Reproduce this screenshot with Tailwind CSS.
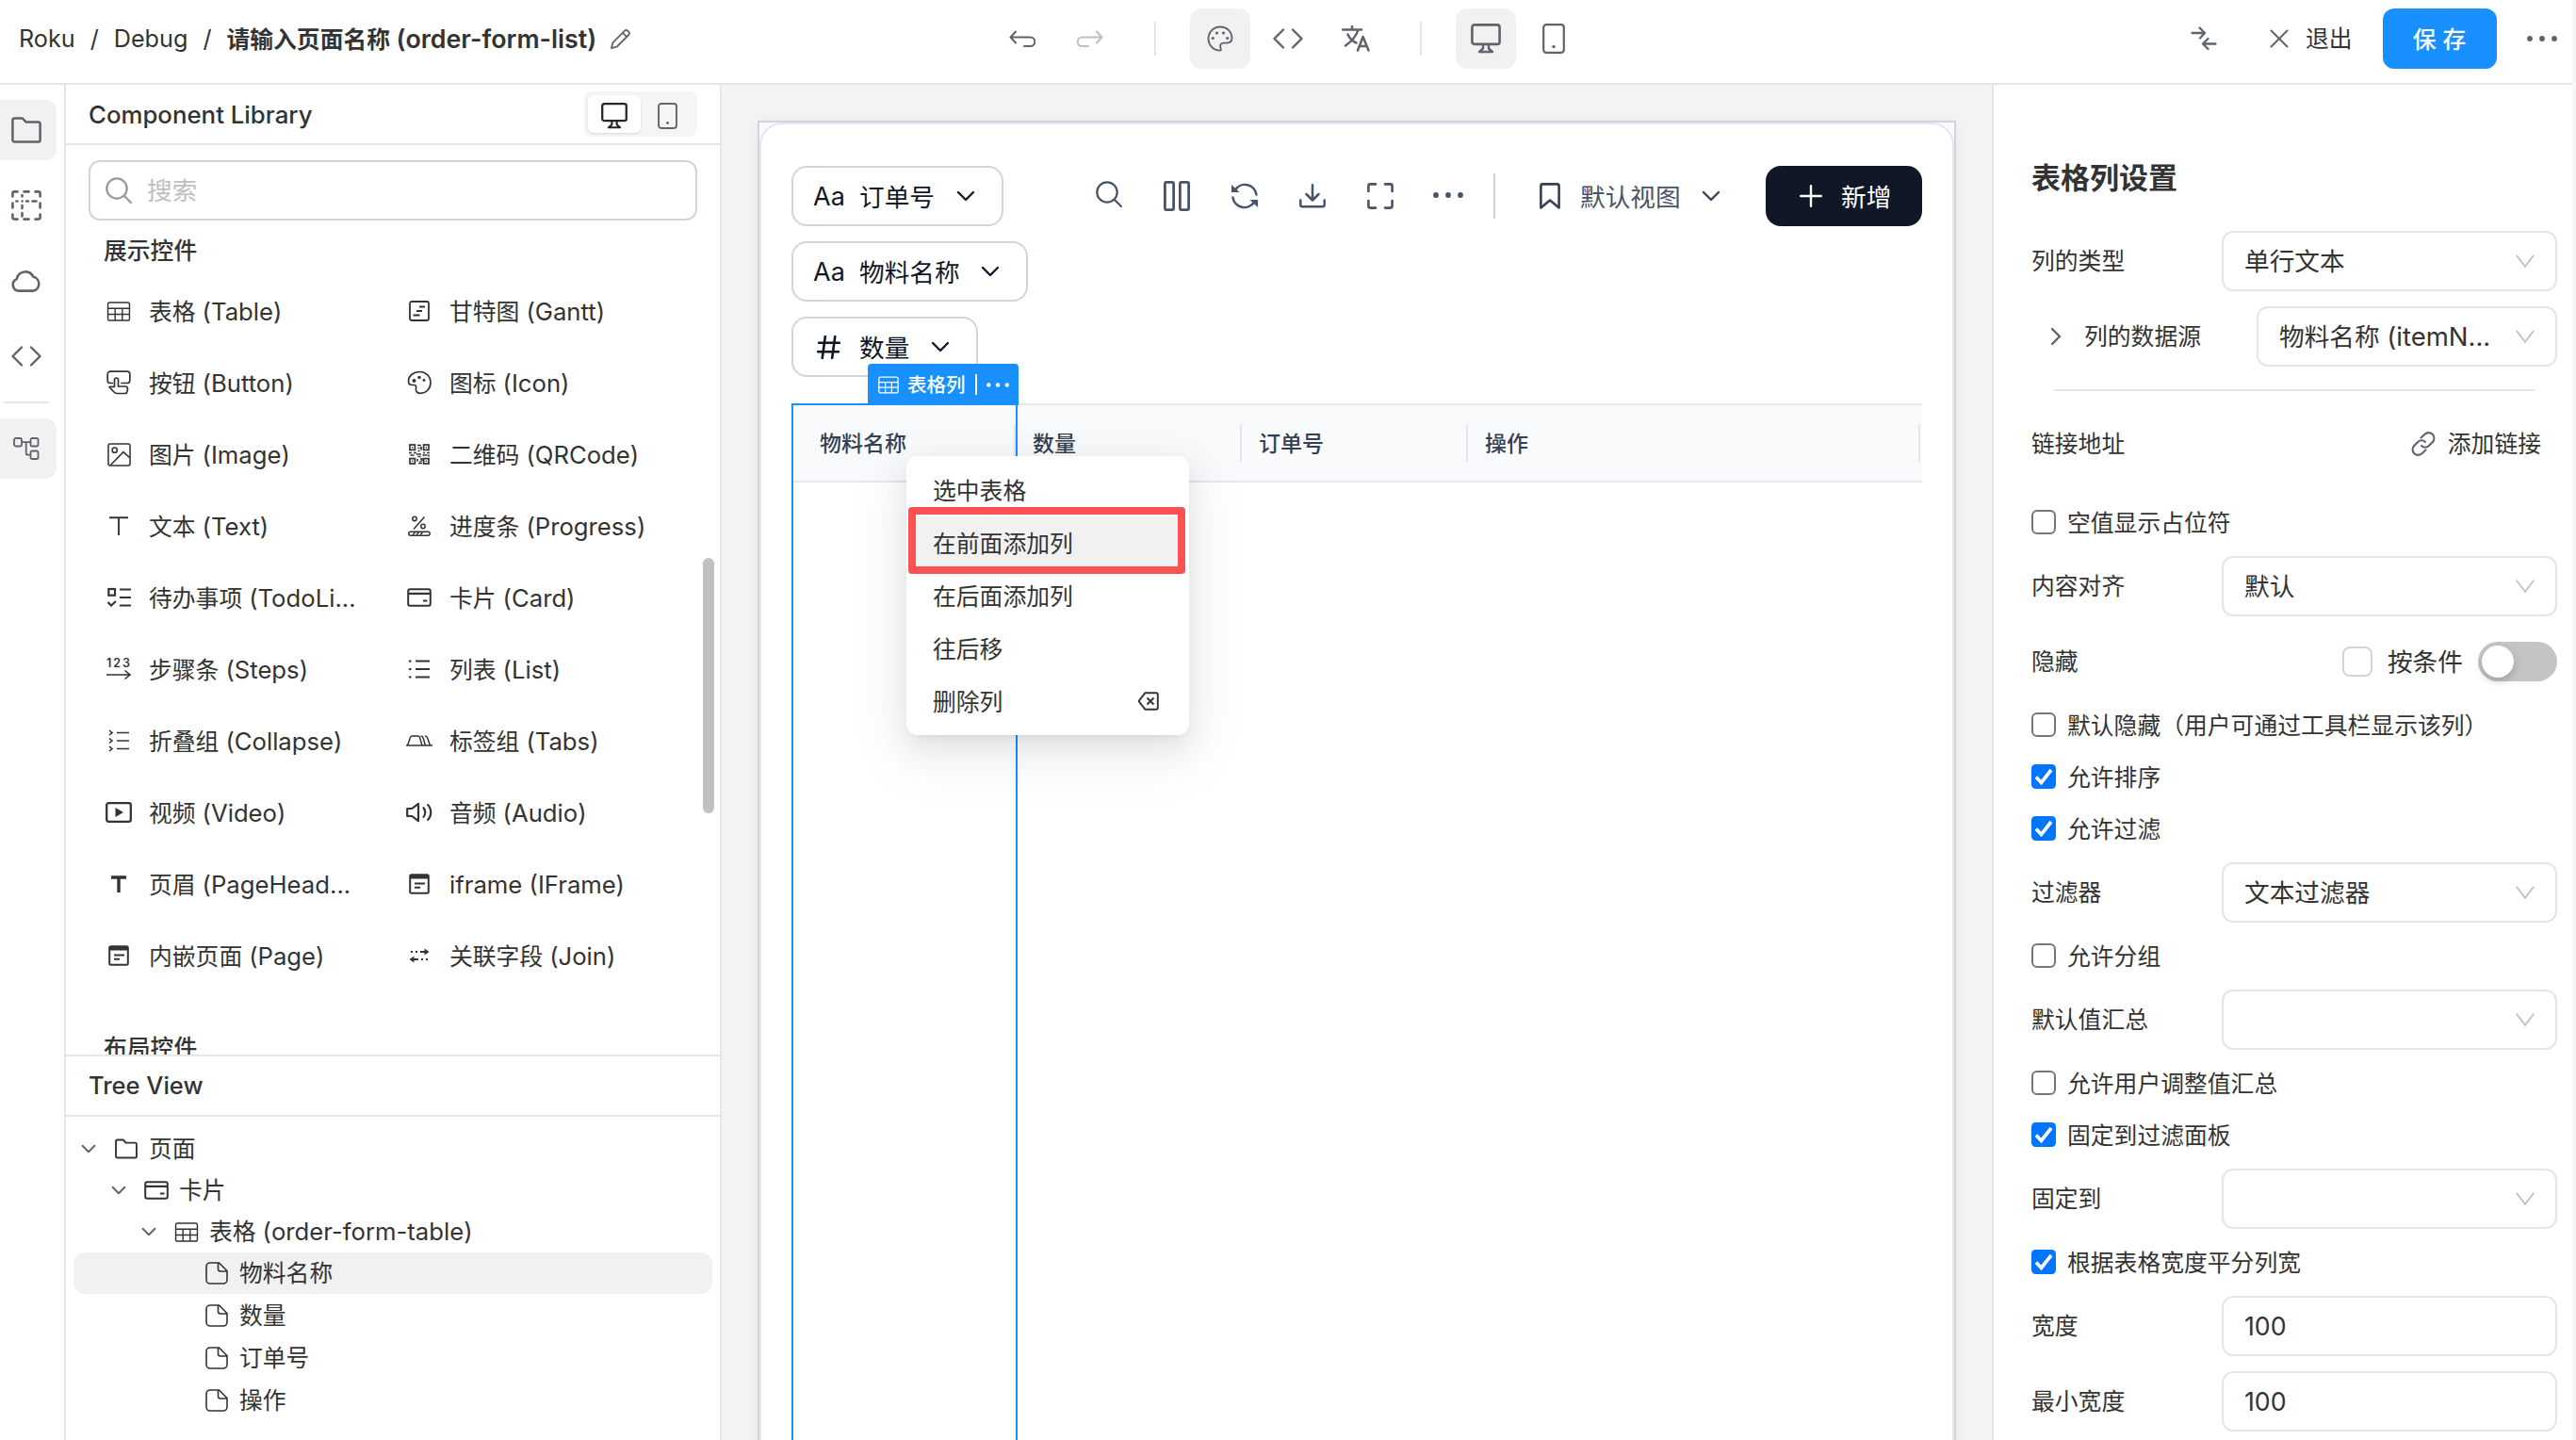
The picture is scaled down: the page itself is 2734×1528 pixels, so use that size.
<!DOCTYPE html>
<html lang="zh-CN">
<head>
<meta charset="utf-8">
<title>order-form-list</title>
<script src="https://cdn.jsdelivr.net/npm/@tailwindcss/browser@4"></script>
</head>
<body class="bg-[#f7f7f7] font-['Inter','Noto_Sans_CJK_SC',sans-serif] text-[24.8px] leading-[32px] text-[#333333] [&_p]:pt-[2px]">
<svg class="hidden" xmlns="http://www.w3.org/2000/svg">
  <symbol id="undo" viewBox="0 0 28 19"><path d="M7 1.5 1.5 7.5 7 13.5M2 7.5h20.5a4.8 4.8 0 0 1 0 9.6H16" fill="none" stroke="currentColor" stroke-width="2" stroke-linecap="round" stroke-linejoin="round"/></symbol>
  <symbol id="palette" viewBox="0 0 28 28"><path d="M14 1.5C7 1.5 1.5 7 1.5 14c0 7.3 6 12.8 12.3 12.6.9 0 1.2-.7.9-1.6-1.7-4.6.2-6.4 3.3-6.4h3c3.300 0 5.500-1.900 5.500-5C26.500 6.600 21 1.500 14 1.500Z" fill="none" stroke="currentColor" stroke-width="1.900"/><g fill="currentColor"><circle cx="10.500" cy="8" r="1.600"/><circle cx="17.500" cy="8" r="1.600"/><circle cx="6.300" cy="13.500" r="1.600"/><circle cx="21.700" cy="13.500" r="1.600"/></g></symbol>
  <symbol id="code" viewBox="0 0 32 22"><path d="M11 1.500 1.500 11 11 20.500M21 1.500 30.500 11 21 20.500" fill="none" stroke="currentColor" stroke-width="2.400" stroke-linecap="round" stroke-linejoin="round"/></symbol>
  <symbol id="translate" viewBox="0 0 30 28"><path d="M1 4.500h20M11 1v3.500M17.500 4.500C15.500 12 9.500 17.500 4 21.500M6.500 9.500c2 4.500 5 7.500 9 9" fill="none" stroke="currentColor" stroke-width="2.500" stroke-linecap="round"/><path d="m17 26.500 5.600-14.500L28.500 26.500M19 22h7.500" fill="none" stroke="currentColor" stroke-width="2.500" stroke-linecap="round" stroke-linejoin="round"/></symbol>
  <symbol id="desktop" viewBox="0 0 32 32"><rect x="1.400" y="1.400" width="29.200" height="20.500" rx="2.500" fill="none" stroke="currentColor" stroke-width="2.600"/><path d="M13 22v4.500L9 30h14l-4-3.500V22" fill="none" stroke="currentColor" stroke-width="2.400" stroke-linejoin="round"/></symbol>
  <symbol id="mobile" viewBox="0 0 24 32"><rect x="1.200" y="1.200" width="21.600" height="29.600" rx="3" fill="none" stroke="currentColor" stroke-width="2.200"/><circle cx="12" cy="24.500" r="1.700" fill="currentColor"/></symbol>
  <symbol id="swap" viewBox="0 0 28 26"><path d="M1.500 7h13M9.500 1.500 15 7l-5 5.500M26.500 18.500h-13M18.500 13 13 18.500l5.500 5.500" fill="none" stroke="currentColor" stroke-width="2.300" stroke-linecap="round" stroke-linejoin="round"/></symbol>
  <symbol id="x" viewBox="0 0 20 20"><path d="m1.500 1.500 17 17M18.500 1.500l-17 17" fill="none" stroke="currentColor" stroke-width="2" stroke-linecap="round"/></symbol>
  <symbol id="dots" viewBox="0 0 32 6"><g fill="currentColor"><circle cx="3" cy="3" r="2.900"/><circle cx="16" cy="3" r="2.900"/><circle cx="29" cy="3" r="2.900"/></g></symbol>
  <symbol id="pencil" viewBox="0 0 24 24"><path d="m2 22 1.500-6L16.700 2.800a2.300 2.300 0 0 1 3.300 0l1.200 1.200a2.300 2.300 0 0 1 0 3.300L8 20.500ZM14.500 5l4.500 4.500" fill="none" stroke="currentColor" stroke-width="1.900" stroke-linejoin="round"/></symbol>
  <symbol id="folder" viewBox="0 0 32 28"><path d="M1.400 3.500c0-1.200.9-2.100 2.100-2.100h7.300c.6 0 1.100.2 1.500.6L15.500 5.500h13c1.200 0 2.100.9 2.100 2.100v16.900c0 1.200-.9 2.100-2.100 2.100h-25a2.100 2.100 0 0 1-2.100-2.100Z" fill="none" stroke="currentColor" stroke-width="2.500" stroke-linejoin="round"/></symbol>
  <symbol id="dashed" viewBox="0 0 32 32"><g fill="none" stroke="currentColor" stroke-width="2.600" stroke-linecap="round"><path d="M1.400 6.500V3.400c0-1.100.9-2 2-2h3.100M25.500 1.400h3.100c1.100 0 2 .9 2 2v3.100M30.600 25.500v3.100c0 1.100-.9 2-2 2h-3.100M6.500 30.600H3.400a2 2 0 0 1-2-2v-3.100"/><path d="M13.500 1.400h5M13.500 30.600h5M1.400 13.500v5M30.600 13.500v5M5.500 11.500h1M11.500 5v1.500M11.500 11.500h.01M16 11.500h2M22.500 11.500h4M11.500 16v3M11.500 24v3.500"/></g></symbol>
  <symbol id="cloud" viewBox="0 0 32 24"><path d="M8 22.600a6.500 6.500 0 0 1-2.200-12.500A9.300 9.300 0 0 1 23.400 7.800a7.600 7.600 0 0 1 .1 14.800Z" fill="none" stroke="currentColor" stroke-width="2.600" stroke-linejoin="round"/></symbol>
  <symbol id="tree" viewBox="0 0 28 26"><g fill="none" stroke="currentColor" stroke-width="1.800"><rect x="1" y="2" width="8" height="8.500" rx="1.800"/><rect x="18.500" y="2" width="8" height="8.500" rx="1.800"/><rect x="18.500" y="15.500" width="8" height="8.500" rx="1.800"/><path d="M9 6.200h9.500M13.700 6.200v11.500c0 1.200.6 2 2 2h2.800"/></g></symbol>
  <symbol id="search" viewBox="0 0 28 28"><circle cx="12" cy="12" r="10.700" fill="none" stroke="currentColor" stroke-width="2.200"/><path d="m20 20 7 7" stroke="currentColor" stroke-width="2.200" stroke-linecap="round"/></symbol>
  <symbol id="table" viewBox="0 0 26 22"><g fill="none" stroke="currentColor" stroke-width="1.500"><rect x="1" y="1" width="24" height="20" rx="2"/><path d="M1 7.500h24M1 14.200h24M9 7.500V21M17 7.500V21"/></g></symbol>
  <symbol id="gantt" viewBox="0 0 22 22"><rect x="1" y="1" width="20" height="20" rx="2" fill="none" stroke="currentColor" stroke-width="1.800"/><path d="M11 6.500h6M8 11h6M4.500 15.500h7" stroke="currentColor" stroke-width="2"/></symbol>
  <symbol id="button" viewBox="0 0 26 26"><g fill="none" stroke="currentColor" stroke-width="1.700" stroke-linejoin="round" stroke-linecap="round"><path d="M6.500 13.500H4A2.800 2.800 0 0 1 1.200 10.700V4A2.800 2.800 0 0 1 4 1.200h18A2.800 2.800 0 0 1 24.800 4v6.700a2.800 2.800 0 0 1-2.800 2.800h-6"/><path d="M8.500 17.500V10a2 2 0 0 1 4 0v7h7.500a2.500 2.500 0 0 1 2.500 2.500l-.5 3a2.500 2.500 0 0 1-2.500 2h-8.500c-1.500 0-2.500-1-3.500-2L3 17.700l3-.4Z"/></g></symbol>
  <symbol id="paint" viewBox="0 0 26 26"><path d="M13.500 1.500C7 1.500 1.500 5.500 1.500 11.500c0 3 1.500 4 4 4h1.800c1.700 0 2.700 1.200 2.300 2.800-.6 3.200.5 6 4.400 6 6.500 0 11-5 11-11.500S19.500 1.500 13.500 1.500Z" fill="none" stroke="currentColor" stroke-width="1.700"/><g fill="currentColor"><circle cx="7.500" cy="11" r="2"/><circle cx="13" cy="7.500" r="1.700"/><circle cx="18" cy="10.500" r="1.400"/></g></symbol>
  <symbol id="image" viewBox="0 0 26 26"><g fill="none" stroke="currentColor" stroke-width="1.600"><rect x="1" y="1" width="24" height="24" rx="2"/><circle cx="8" cy="8" r="2.700"/><path d="m3.500 24.500 14-14.500 7.500 6.500"/></g></symbol>
  <symbol id="qr" viewBox="0 0 22 22"><g fill="none" stroke="currentColor" stroke-width="1.700"><rect x="1" y="1" width="5.400" height="5.400"/><rect x="15.600" y="1" width="5.400" height="5.400"/><rect x="1" y="15.600" width="5.400" height="5.400"/><rect x="15.600" y="15.600" width="5.400" height="5.400"/><path d="M9 1.500h4M9.500 4.500h2M13 3v3.500M9.500 7.500h2M0 9.500h3M5 9.500h3M1.500 12h4M8 11h5M15 9.500h2M19 9.500h3M14.500 12h5M21 11.500v2M9.500 13.500h3M9 16v2.500M12 16h2v2M10 20.500h4M11.500 18.500h2"/></g><g fill="currentColor"><rect x="3" y="3" width="1.400" height="1.400"/><rect x="17.600" y="3" width="1.400" height="1.400"/><rect x="3" y="17.600" width="1.400" height="1.400"/><rect x="17.600" y="17.600" width="1.400" height="1.400"/></g></symbol>
  <symbol id="tthin" viewBox="0 0 20 20"><path d="M0 1.200h20M10 1.200V20" stroke="currentColor" stroke-width="1.900"/></symbol>
  <symbol id="tbold" viewBox="0 0 16 18"><path d="M0 2h16M8 2v16" stroke="currentColor" stroke-width="3.400"/></symbol>
  <symbol id="progress" viewBox="0 0 24 22"><g fill="none" stroke="currentColor" stroke-width="1.500"><circle cx="7" cy="3.500" r="2.200"/><circle cx="16" cy="11.500" r="2.200"/><path d="M17.500 1.500 6 14.500"/><rect x=".8" y="17.200" width="22.400" height="4" rx="2"/><path d="m5 20.500 2.500-2.500M9 20.500l2.500-2.500M13 20.500l2.500-2.500"/></g></symbol>
  <symbol id="todo" viewBox="0 0 26 22"><g fill="none" stroke="currentColor" stroke-width="2.200"><rect x="2.300" y="2" width="6.700" height="6.700"/><path d="M14 2.500h12M14 11h12M14 19.500h12M1.500 16l3.500 3.500 5-4.500"/></g></symbol>
  <symbol id="card" viewBox="0 0 26 20"><rect x="1.200" y="1.200" width="23.600" height="17.600" rx="2" fill="none" stroke="currentColor" stroke-width="2"/><path d="M1 5.800h24M17 13.500h4.500" stroke="currentColor" stroke-width="2.200"/></symbol>
  <symbol id="steps" viewBox="0 0 26 26"><text x="13" y="10.500" text-anchor="middle" font-size="12.500" font-weight="600" letter-spacing="1" textLength="26" fill="currentColor">123</text><path d="M0 19h25M19.500 14.500 25 19l-5.500 4.500" fill="none" stroke="currentColor" stroke-width="1.600"/></symbol>
  <symbol id="list" viewBox="0 0 22 20"><path d="M0 1.500h2.500M0 10h2.500M0 18.500h2.500M7 1.500h15M7 10h15M7 18.500h15" stroke="currentColor" stroke-width="2"/></symbol>
  <symbol id="collapse" viewBox="0 0 22 24"><path d="m1 1 3 2.500L1 6M1 9.500 4 12l-3 2.500M1 18l3 2.500L1 23M9 3.500h13M9 12h13M9 20.500h13" fill="none" stroke="currentColor" stroke-width="1.600"/></symbol>
  <symbol id="tabs" viewBox="0 0 28 12"><path d="M0 11h28M1.500 11 4.500 2.500C4.800 1.500 5.500 1 6.500 1h6c1 0 1.600.4 2 1.400L17 11M15.500 1c1.500 0 2 .5 2.500 1.800L20.500 11M20 1c1.500 0 2 .5 2.500 1.800L25.500 11" fill="none" stroke="currentColor" stroke-width="1.500"/></symbol>
  <symbol id="video" viewBox="0 0 28 22"><rect x="1.200" y="1.200" width="25.600" height="19.600" rx="2" fill="none" stroke="currentColor" stroke-width="2.300"/><path d="m10.500 6 8.500 5-8.500 5Z" fill="currentColor"/></symbol>
  <symbol id="audio" viewBox="0 0 28 22"><g fill="none" stroke="currentColor" stroke-width="2.200" stroke-linejoin="round"><path d="M1.200 7h5L13 1.800v18.400L6.200 15h-5Z"/><path d="M18 5.500c3 3 3 8 0 11M22.500 2.500c5 4.500 5 12.500 0 17"/></g></symbol>
  <symbol id="frame" viewBox="0 0 22 22"><rect x="1.200" y="1.200" width="19.600" height="19.600" rx="1.500" fill="none" stroke="currentColor" stroke-width="2"/><path d="M1 3.500h20" stroke="currentColor" stroke-width="4"/><path d="M6 10.500h11M6 14.800h6" stroke="currentColor" stroke-width="2"/></symbol>
  <symbol id="join" viewBox="0 0 22 16"><path d="M2 4h2M7 4h2M12 4h6M20 12h-2M15 12h-2M10 12H4" stroke="currentColor" stroke-width="1.800"/><path d="m16.500.5 5 3.500-5 3.500ZM5.500 8.500l-5 3.500 5 3.500Z" fill="currentColor"/></symbol>
  <symbol id="down" viewBox="0 0 20 12"><path d="m2 2 8 8 8-8" fill="none" stroke="currentColor" stroke-width="2.400" stroke-linecap="round" stroke-linejoin="round"/></symbol>
  <symbol id="vdown" viewBox="0 0 20 14"><path d="m.8.8 9.200 12L19.200.8" fill="none" stroke="currentColor" stroke-width="1.800"/></symbol>
  <symbol id="file" viewBox="0 0 24 24"><path d="M5 1h9.500L23 9.500V19a4 4 0 0 1-4 4H5a4 4 0 0 1-4-4V5a4 4 0 0 1 4-4ZM13.500 1v6.500a2.500 2.500 0 0 0 2.500 2.500h7" fill="none" stroke="currentColor" stroke-width="1.600" stroke-linejoin="round"/></symbol>
  <symbol id="columns" viewBox="0 0 28 32"><g fill="none" stroke="currentColor" stroke-width="2.800"><rect x="1.400" y="1.400" width="9.200" height="29.200" rx="1.500"/><rect x="17.400" y="1.400" width="9.200" height="29.200" rx="1.500"/></g></symbol>
  <symbol id="refresh" viewBox="0 0 28 28"><g fill="none" stroke="currentColor" stroke-width="2.500" stroke-linecap="round"><path d="M4 7.500A12.300 12.300 0 0 1 26.500 12.500M24 20.500A12.300 12.300 0 0 1 1.500 15.500"/></g><path d="M0 2v8h8.500ZM28 26v-8h-8.500Z" fill="currentColor"/></symbol>
  <symbol id="download" viewBox="0 0 28 26"><path d="M1.300 17.500v5c0 1 .7 1.700 1.700 1.700h22c1 0 1.700-.7 1.700-1.700v-5M14 1.300V17M7.500 11l6.500 6.500L20.500 11" fill="none" stroke="currentColor" stroke-width="2.500" stroke-linecap="round" stroke-linejoin="round"/></symbol>
  <symbol id="expand" viewBox="0 0 28 28"><path d="M1.400 9V3.400c0-1.100.9-2 2-2H9M19 1.400h5.600c1.100 0 2 .9 2 2V9M26.600 19v5.600c0 1.100-.9 2-2 2H19M9 26.600H3.400a2 2 0 0 1-2-2V19" fill="none" stroke="currentColor" stroke-width="2.600" stroke-linecap="round"/></symbol>
  <symbol id="bookmark" viewBox="0 0 22 28"><path d="M1.400 3.400c0-1.100.9-2 2-2h15.200c1.100 0 2 .9 2 2v23L11 18.500 1.400 26.400Z" fill="none" stroke="currentColor" stroke-width="2.600" stroke-linejoin="round"/></symbol>
  <symbol id="plus" viewBox="0 0 24 24"><path d="M12 1.200v21.600M1.200 12h21.600" stroke="currentColor" stroke-width="2.400" stroke-linecap="round"/></symbol>
  <symbol id="hash" viewBox="0 0 24 24"><path d="M8.500 1 5.500 23M18.500 1l-3 22M2 7.500h21M1 16.500h21" fill="none" stroke="currentColor" stroke-width="2.500" stroke-linecap="round"/></symbol>
  <symbol id="backspace" viewBox="0 0 22 20"><path d="M7.500 1.200H19c1 0 1.800.7 1.800 1.700v14.200c0 1-.8 1.700-1.800 1.700H7.500L1.200 10.800a1.200 1.200 0 0 1 0-1.600ZM9.500 6.500l7 7M16.500 6.500l-7 7" fill="none" stroke="currentColor" stroke-width="1.900" stroke-linejoin="round"/></symbol>
  <symbol id="link" viewBox="0 0 26 26"><path d="M10.500 6.500 14.300 2.900a5.800 5.800 0 0 1 8.500 8.200l-4 4a5.500 5.500 0 0 1-7.800 0M15.500 19.500l-3.800 3.600a5.800 5.800 0 0 1-8.500-8.200l4-4a5.500 5.500 0 0 1 7.800 0" fill="none" stroke="currentColor" stroke-width="2.100" stroke-linecap="round"/></symbol>
  <symbol id="check" viewBox="0 0 26 26"><rect width="26" height="26" rx="4.500" fill="#0075ff"/><path d="m5 13.500 5.500 6L21 6" fill="none" stroke="#fff" stroke-width="3.700"/></symbol>
</svg>

<div class="flex h-[1528px] w-[2730px] flex-col overflow-hidden bg-white">
  <header class="flex h-[90px] shrink-0 items-start border-b-2 border-[#e5e5e5] pl-5">
    <div class="flex h-[82px] w-[1037px] items-center whitespace-nowrap text-[25.200px]">
      <span>Roku</span><span class="mx-[16px]">/</span><span>Debug</span><span class="mx-[16px]">/</span>
      <span class="font-semibold"><span class="text-[24.8px]">请输入页面名称</span> <span class="text-[26.800px]">(order-form-list)</span></span>
      <svg class="ml-[14px] size-[23px] text-[#5f636b]"><use href="#pencil"/></svg>
    </div>
    <div class="flex h-[82px] w-[1268px] items-center text-[#5f636b]">
      <div class="flex w-[56px] justify-center"><svg class="h-[19px] w-[28px]"><use href="#undo"/></svg></div>
      <div class="ml-4 flex w-[56px] justify-center text-[#bfbfbf]"><svg class="h-[19px] w-[28px] -scale-x-100"><use href="#undo"/></svg></div>
      <div class="ml-10 h-9 w-[2px] bg-[#e5e5e5]"></div>
      <div class="ml-9 flex size-16 items-center justify-center rounded-xl bg-[#f1f1f1]"><svg class="size-[28px]"><use href="#palette"/></svg></div>
      <div class="ml-2 flex size-16 items-center justify-center"><svg class="h-[22px] w-[32px]"><use href="#code"/></svg></div>
      <div class="ml-2 flex size-16 items-center justify-center"><svg class="h-[28px] w-[30px]"><use href="#translate"/></svg></div>
      <div class="ml-9 h-9 w-[2px] bg-[#e5e5e5]"></div>
      <div class="ml-9 flex size-16 items-center justify-center rounded-xl bg-[#f1f1f1]"><svg class="size-[32px]"><use href="#desktop"/></svg></div>
      <div class="ml-2 flex size-16 items-center justify-center"><svg class="h-[32px] w-[24px]"><use href="#mobile"/></svg></div>
    </div>
    <div class="flex h-[82px] flex-1 items-center text-[#5f636b]">
      <svg class="h-[26px] w-[28px]"><use href="#swap"/></svg>
      <svg class="ml-[56px] size-[20px]"><use href="#x"/></svg>
      <span class="ml-[18px] text-[#333333]">退出</span>
      <button class="ml-[32px] flex h-16 w-[121px] items-center justify-center rounded-xl bg-[#1890ff] pt-[2px] font-medium text-white">保<span class="w-[7px]"></span>存</button>
      <svg class="ml-8 h-[6px] w-[32px]"><use href="#dots"/></svg>
    </div>
  </header>

  <div class="flex min-h-0 flex-1">
    <nav class="flex w-[70px] shrink-0 flex-col border-r-2 border-[#e5e5e5] pt-4 text-[#5f636b]">
      <div class="flex h-16 w-[60px] items-center rounded-r-xl bg-[#f1f1f1] pl-3"><svg class="h-[28px] w-[32px]"><use href="#folder"/></svg></div>
      <div class="mt-4 flex h-16 items-center pl-3"><svg class="size-[32px]"><use href="#dashed"/></svg></div>
      <div class="mt-4 flex h-16 items-center pl-3"><svg class="h-[24px] w-[32px]"><use href="#cloud"/></svg></div>
      <div class="mt-4 flex h-16 items-center pl-3"><svg class="h-[22px] w-[32px]"><use href="#code"/></svg></div>
      <div class="mt-4 ml-1 h-[2px] w-12 bg-[#e5e5e5]"></div>
      <div class="mt-4 flex h-16 w-[60px] items-center rounded-r-xl bg-[#f1f1f1] pl-[14px]"><svg class="h-[26px] w-[28px]"><use href="#tree"/></svg></div>
    </nav>

    <aside class="flex w-[696px] shrink-0 flex-col border-r-2 border-[#e5e7eb]">
      <div class="flex h-16 shrink-0 items-center justify-between border-b-2 border-[#e5e5e5] pr-6 pl-6">
        <h2 class="pt-[2px] text-[25.8px] font-medium">Component Library</h2>
        <div class="flex h-12 w-[120px] items-center rounded-lg bg-[#f5f5f5] pl-1">
          <div class="flex h-10 w-14 items-center justify-center rounded-md bg-white pt-[4px] shadow-sm"><svg class="size-[28px] text-[#262626]"><use href="#desktop"/></svg></div>
          <div class="flex w-14 items-center justify-center pt-[3px] text-[#666666]"><svg class="h-[28px] w-[21px]"><use href="#mobile"/></svg></div>
        </div>
      </div>
      <div class="relative h-[965px] shrink-0 overflow-hidden">
        <div class="mt-4 ml-6 flex h-16 w-[646px] items-center rounded-xl border-2 border-[#d0d5dd] pl-4 text-[26.7px] text-[#bfbfbf]"><svg class="size-[28px] text-[#999999]"><use href="#search"/></svg><span class="ml-4">搜索</span></div>
        <h3 class="mt-4 ml-10 font-medium">展示控件</h3>
        <div class="mt-[10px] ml-10 grid auto-rows-[76px] grid-cols-[319px_319px] items-center whitespace-nowrap [&_p_span]:text-[25.700px]">
          <div class="flex items-center gap-4"><span class="flex w-8 justify-center"><svg class="h-[21px] w-[26px]"><use href="#table"/></svg></span><p>表格 <span>(Table)</span></p></div>
          <div class="flex items-center gap-4"><span class="flex w-8 justify-center"><svg class="size-[22px]"><use href="#gantt"/></svg></span><p>甘特图 <span>(Gantt)</span></p></div>
          <div class="flex items-center gap-4"><span class="flex w-8 justify-center"><svg class="size-[26px]"><use href="#button"/></svg></span><p>按钮 <span>(Button)</span></p></div>
          <div class="flex items-center gap-4"><span class="flex w-8 justify-center"><svg class="size-[26px]"><use href="#paint"/></svg></span><p>图标 <span>(Icon)</span></p></div>
          <div class="flex items-center gap-4"><span class="flex w-8 justify-center"><svg class="size-[25px]"><use href="#image"/></svg></span><p>图片 <span>(Image)</span></p></div>
          <div class="flex items-center gap-4"><span class="flex w-8 justify-center"><svg class="size-[22px]"><use href="#qr"/></svg></span><p>二维码 <span>(QRCode)</span></p></div>
          <div class="flex items-center gap-4"><span class="flex w-8 justify-center"><svg class="size-[20px]"><use href="#tthin"/></svg></span><p>文本 <span>(Text)</span></p></div>
          <div class="flex items-center gap-4"><span class="flex w-8 justify-center"><svg class="h-[22px] w-[24px]"><use href="#progress"/></svg></span><p>进度条 <span>(Progress)</span></p></div>
          <div class="flex items-center gap-4"><span class="flex w-8 justify-center"><svg class="h-[22px] w-[26px]"><use href="#todo"/></svg></span><p>待办事项 <span>(TodoLi...</span></p></div>
          <div class="flex items-center gap-4"><span class="flex w-8 justify-center"><svg class="h-[20px] w-[26px]"><use href="#card"/></svg></span><p>卡片 <span>(Card)</span></p></div>
          <div class="flex items-center gap-4"><span class="flex w-8 justify-center"><svg class="size-[26px]"><use href="#steps"/></svg></span><p>步骤条 <span>(Steps)</span></p></div>
          <div class="flex items-center gap-4"><span class="flex w-8 justify-center"><svg class="h-[20px] w-[22px]"><use href="#list"/></svg></span><p>列表 <span>(List)</span></p></div>
          <div class="flex items-center gap-4"><span class="flex w-8 justify-center"><svg class="h-[24px] w-[22px]"><use href="#collapse"/></svg></span><p>折叠组 <span>(Collapse)</span></p></div>
          <div class="flex items-center gap-4"><span class="flex w-8 justify-center"><svg class="h-[12px] w-[28px]"><use href="#tabs"/></svg></span><p>标签组 <span>(Tabs)</span></p></div>
          <div class="flex items-center gap-4"><span class="flex w-8 justify-center"><svg class="h-[22px] w-[28px]"><use href="#video"/></svg></span><p>视频 <span>(Video)</span></p></div>
          <div class="flex items-center gap-4"><span class="flex w-8 justify-center"><svg class="h-[22px] w-[28px]"><use href="#audio"/></svg></span><p>音频 <span>(Audio)</span></p></div>
          <div class="flex items-center gap-4"><span class="flex w-8 justify-center"><svg class="h-[18px] w-[16px]"><use href="#tbold"/></svg></span><p>页眉 <span>(PageHead...</span></p></div>
          <div class="flex items-center gap-4"><span class="flex w-8 justify-center"><svg class="size-[22px]"><use href="#frame"/></svg></span><p><span>iframe (IFrame)</span></p></div>
          <div class="flex items-center gap-4"><span class="flex w-8 justify-center"><svg class="size-[22px]"><use href="#frame"/></svg></span><p>内嵌页面 <span>(Page)</span></p></div>
          <div class="flex items-center gap-4"><span class="flex w-8 justify-center"><svg class="h-[16px] w-[22px]"><use href="#join"/></svg></span><p>关联字段 <span>(Join)</span></p></div>
        </div>
        <h3 class="mt-11 ml-10 font-medium">布局控件</h3>
        <div class="absolute top-[438px] left-[676px] h-[271px] w-3 rounded-full bg-[#c1c1c1]"></div>
      </div>
      <div class="flex h-[66px] shrink-0 items-center border-y-2 border-[#e5e5e5] pl-6"><h2 class="text-[25.5px] font-medium">Tree View</h2></div>
      <div class="mt-3 flex flex-col px-2">
        <div class="flex h-11 items-center pl-2"><svg class="h-[10px] w-4 text-[#5f636b]"><use href="#down"/></svg><svg class="ml-5 h-[22px] w-6"><use href="#folder"/></svg><span class="ml-3">页面</span></div>
        <div class="flex h-11 items-center pl-10"><svg class="h-[10px] w-4 text-[#5f636b]"><use href="#down"/></svg><svg class="ml-[19px] h-[20px] w-[26px]"><use href="#card"/></svg><span class="ml-[11px]">卡片</span></div>
        <div class="flex h-11 items-center pl-[72px]"><svg class="h-[10px] w-4 text-[#5f636b]"><use href="#down"/></svg><svg class="ml-[19px] h-[21px] w-[26px]"><use href="#table"/></svg><span class="ml-[11px]">表格 <span class="text-[25.700px]">(order-form-table)</span></span></div>
        <div class="flex h-11 items-center rounded-xl bg-[#f1f1f1] pl-[140px]"><svg class="size-6"><use href="#file"/></svg><span class="ml-3">物料名称</span></div>
        <div class="mt-px flex h-11 items-center pl-[140px]"><svg class="size-6"><use href="#file"/></svg><span class="ml-3">数量</span></div>
        <div class="mt-px flex h-11 items-center pl-[140px]"><svg class="size-6"><use href="#file"/></svg><span class="ml-3">订单号</span></div>
        <div class="mt-px flex h-11 items-center pl-[140px]"><svg class="size-6"><use href="#file"/></svg><span class="ml-3">操作</span></div>
      </div>
    </aside>

    <main class="flex w-[1348px] shrink-0 bg-[#f3f4f6] pt-[38px] pl-[38px]">
      <div class="h-[1500px] w-[1272px] border-2 border-[#d0d5dd] bg-[#f9fafb] shadow-[0_0_16px_rgba(16,24,40,0.06)]">
        <div class="relative h-full rounded-3xl border-2 border-[#e4e7ec] bg-white px-8 pt-11">
          <div class="flex items-start text-[26.7px] text-[#101828]">
            <div class="flex w-[315px] flex-col items-start gap-4">
              <div class="flex h-16 w-[225px] items-center rounded-2xl border-2 border-[#d0d5dd] pl-[21px]"><p class="w-[49px] text-[27px]">Aa</p><p>订单号</p><svg class="ml-[23px] h-[12px] w-5"><use href="#down"/></svg></div>
              <div class="flex h-16 w-[251px] items-center rounded-2xl border-2 border-[#d0d5dd] pl-[21px]"><p class="w-[49px] text-[27px]">Aa</p><p>物料名称</p><svg class="ml-[22px] h-[12px] w-5"><use href="#down"/></svg></div>
              <div class="flex h-16 w-[198px] items-center rounded-2xl border-2 border-[#d0d5dd] pl-[21px]"><span class="w-[49px] pl-1"><svg class="size-[25px]"><use href="#hash"/></svg></span><p>数量</p><svg class="ml-[23px] h-[12px] w-5"><use href="#down"/></svg></div>
            </div>
            <div class="flex h-16 flex-1 items-center text-[#475467]">
              <svg class="ml-2 -mt-1 size-[28px]"><use href="#search"/></svg>
              <svg class="ml-11 h-[32px] w-[28px]"><use href="#columns"/></svg>
              <svg class="ml-11 size-[28px]"><use href="#refresh"/></svg>
              <svg class="ml-11 h-[26px] w-[28px]"><use href="#download"/></svg>
              <svg class="ml-11 size-[28px]"><use href="#expand"/></svg>
              <svg class="-mt-[2px] ml-[42px] h-[6px] w-[32px]"><use href="#dots"/></svg>
              <div class="ml-8 h-12 w-[2px] bg-[#d0d5dd]"></div>
              <svg class="ml-[47px] h-[28px] w-[22px] text-[#344054]"><use href="#bookmark"/></svg>
              <p class="ml-[21px]">默认视图</p>
              <svg class="ml-[22px] h-[12px] w-5 text-[#344054]"><use href="#down"/></svg>
              <button class="ml-auto flex h-16 w-[166px] items-center rounded-2xl bg-[#101828] pl-9 text-white"><svg class="size-6"><use href="#plus"/></svg><p class="ml-5">新增</p></button>
            </div>
          </div>

          <div class="relative mt-7 h-[1140px]">
            <div class="flex h-[84px] items-center border-y-2 border-[#e4e7ec] bg-[#f9fafb] text-[23px] font-medium text-[#344054]">
              <div class="flex h-10 w-[238px] items-center border-r-2 border-[#e4e7ec] pl-[30px]"><p>物料名称</p></div>
              <div class="flex h-10 w-[240px] items-center border-r-2 border-[#e4e7ec] pl-[18px]"><p>数量</p></div>
              <div class="flex h-10 w-[240px] items-center border-r-2 border-[#e4e7ec] pl-[18px]"><p>订单号</p></div>
              <div class="flex h-10 w-[480px] items-center border-r-2 border-[#e4e7ec] pl-[18px]"><p>操作</p></div>
            </div>
            <div class="absolute top-0 left-0 h-[1140px] w-[240px] border-2 border-[#1890ff]"></div>
            <div class="absolute -top-[42px] left-[81px] flex h-[44px] w-[160px] items-center rounded-t bg-[#1890ff] pl-[11px] text-[20.500px] font-medium text-white">
              <svg class="h-[19px] w-[22px]"><use href="#table"/></svg><p class="ml-[9px]">表格列</p><span class="ml-[10px] h-[22px] w-[2px] bg-white"></span><svg class="ml-[10px] h-[5px] w-6"><use href="#dots"/></svg>
            </div>
            <div class="absolute top-[56px] left-[122px] flex h-[296px] w-[300px] flex-col rounded-xl bg-white px-[10px] pt-2 shadow-[0_18px_56px_16px_rgba(0,0,0,0.05),0_12px_32px_rgba(0,0,0,0.08),0_6px_12px_-8px_rgba(0,0,0,0.12)]">
              <div class="flex h-14 items-center pl-[18px]"><p>选中表格</p></div>
              <div class="flex h-14 items-center rounded-md bg-[#f1f1f1] pl-[18px]"><p>在前面添加列</p></div>
              <div class="flex h-14 items-center pl-[18px]"><p>在后面添加列</p></div>
              <div class="flex h-14 items-center pl-[18px]"><p>往后移</p></div>
              <div class="flex h-14 items-center justify-between pr-[22px] pl-[18px]"><p>删除列</p><svg class="h-[20px] w-[22px]"><use href="#backspace"/></svg></div>
              <div class="absolute top-[54px] left-[2px] h-[71px] w-[294px] rounded border-8 border-[#fa5252]"></div>
            </div>
          </div>
        </div>
      </div>
    </main>

    <aside class="flex flex-1 flex-col gap-4 border-l-2 border-[#e5e5e5] bg-white pr-4 pl-10">
      <h1 class="mt-[81px] mb-[24px] text-[31px] leading-[36px] font-semibold">表格列设置</h1>
      <div class="-mt-[2px] flex h-16 items-center justify-between"><span>列的类型</span><div class="flex h-16 w-[356px] items-center justify-between rounded-xl border-2 border-[#e5e5e5] pr-[22px] pl-[22px] text-[26.7px]">单行文本<svg class="h-[14px] w-5 text-[#bfbfbf]"><use href="#vdown"/></svg></div></div>
      <div class="flex h-16 items-center"><svg class="ml-4 h-[12px] w-5 -rotate-90 text-[#5f636b]"><use href="#down"/></svg><span class="ml-5">列的数据源</span><div class="ml-auto flex h-16 w-[319px] items-center justify-between rounded-xl border-2 border-[#e5e5e5] pr-[22px] pl-[22px] text-[26.7px]"><span>物料名称 <span class="text-[27.500px]">(itemN...</span></span><svg class="h-[14px] w-5 text-[#bfbfbf]"><use href="#vdown"/></svg></div></div>
      <div class="mt-2 mr-6 ml-6 h-[2px] bg-[#e5e5e5]"></div>
      <div class="mt-2 mb-4 flex h-16 items-center justify-between pr-[17px]"><span>链接地址</span><span class="flex items-center"><svg class="mr-[13px] size-[26px] text-[#5f636b]"><use href="#link"/></svg>添加链接</span></div>
      <label class="flex h-[39px] items-center pb-px"><span class="mr-3 size-[26px] rounded-md border-2 border-[#767676]"></span><p>空值显示占位符</p></label>
      <div class="flex h-16 items-center justify-between"><span>内容对齐</span><div class="flex h-16 w-[356px] items-center justify-between rounded-xl border-2 border-[#e5e5e5] px-[22px] text-[26.7px]">默认<svg class="h-[14px] w-5 text-[#bfbfbf]"><use href="#vdown"/></svg></div></div>
      <div class="flex h-16 items-center"><span>隐藏</span><span class="ml-auto size-8 rounded-lg border-2 border-[#d0d5dd]"></span><span class="mx-4 text-[26.7px]">按条件</span><span class="flex h-[42px] w-[84px] items-center rounded-full bg-[#c4c4c4] pl-1"><span class="size-[34px] rounded-full bg-white shadow-[0_4px_8px_rgba(0,35,11,0.2)]"></span></span></div>
      <label class="flex h-[39px] items-center pb-px"><span class="mr-3 size-[26px] rounded-md border-2 border-[#767676]"></span><p>默认隐藏（用户可通过工具栏显示该列）</p></label>
      <label class="flex h-[39px] items-center pb-px"><svg class="mr-3 size-[26px]"><use href="#check"/></svg><p>允许排序</p></label>
      <label class="flex h-[39px] items-center pb-px"><svg class="mr-3 size-[26px]"><use href="#check"/></svg><p>允许过滤</p></label>
      <div class="flex h-16 items-center justify-between"><span>过滤器</span><div class="flex h-16 w-[356px] items-center justify-between rounded-xl border-2 border-[#e5e5e5] px-[22px] text-[26.7px]">文本过滤器<svg class="h-[14px] w-5 text-[#bfbfbf]"><use href="#vdown"/></svg></div></div>
      <label class="flex h-[39px] items-center pb-px"><span class="mr-3 size-[26px] rounded-md border-2 border-[#767676]"></span><p>允许分组</p></label>
      <div class="flex h-16 items-center justify-between"><span>默认值汇总</span><div class="flex h-16 w-[356px] items-center justify-end rounded-xl border-2 border-[#e5e5e5] px-[22px]"><svg class="h-[14px] w-5 text-[#bfbfbf]"><use href="#vdown"/></svg></div></div>
      <label class="flex h-[39px] items-center pb-px"><span class="mr-3 size-[26px] rounded-md border-2 border-[#767676]"></span><p>允许用户调整值汇总</p></label>
      <label class="flex h-[39px] items-center pb-px"><svg class="mr-3 size-[26px]"><use href="#check"/></svg><p>固定到过滤面板</p></label>
      <div class="flex h-16 items-center justify-between"><span>固定到</span><div class="flex h-16 w-[356px] items-center justify-end rounded-xl border-2 border-[#e5e5e5] px-[22px]"><svg class="h-[14px] w-5 text-[#bfbfbf]"><use href="#vdown"/></svg></div></div>
      <label class="flex h-[39px] items-center pb-px"><svg class="mr-3 size-[26px]"><use href="#check"/></svg><p>根据表格宽度平分列宽</p></label>
      <div class="flex h-16 items-center justify-between"><span>宽度</span><div class="flex h-16 w-[356px] items-center rounded-xl border-2 border-[#e5e5e5] px-[22px] text-[26.7px]">100</div></div>
      <div class="flex h-16 items-center justify-between"><span>最小宽度</span><div class="flex h-16 w-[356px] items-center rounded-xl border-2 border-[#e5e5e5] px-[22px] text-[26.7px]">100</div></div>
    </aside>
  </div>
</div>
</body>
</html>
